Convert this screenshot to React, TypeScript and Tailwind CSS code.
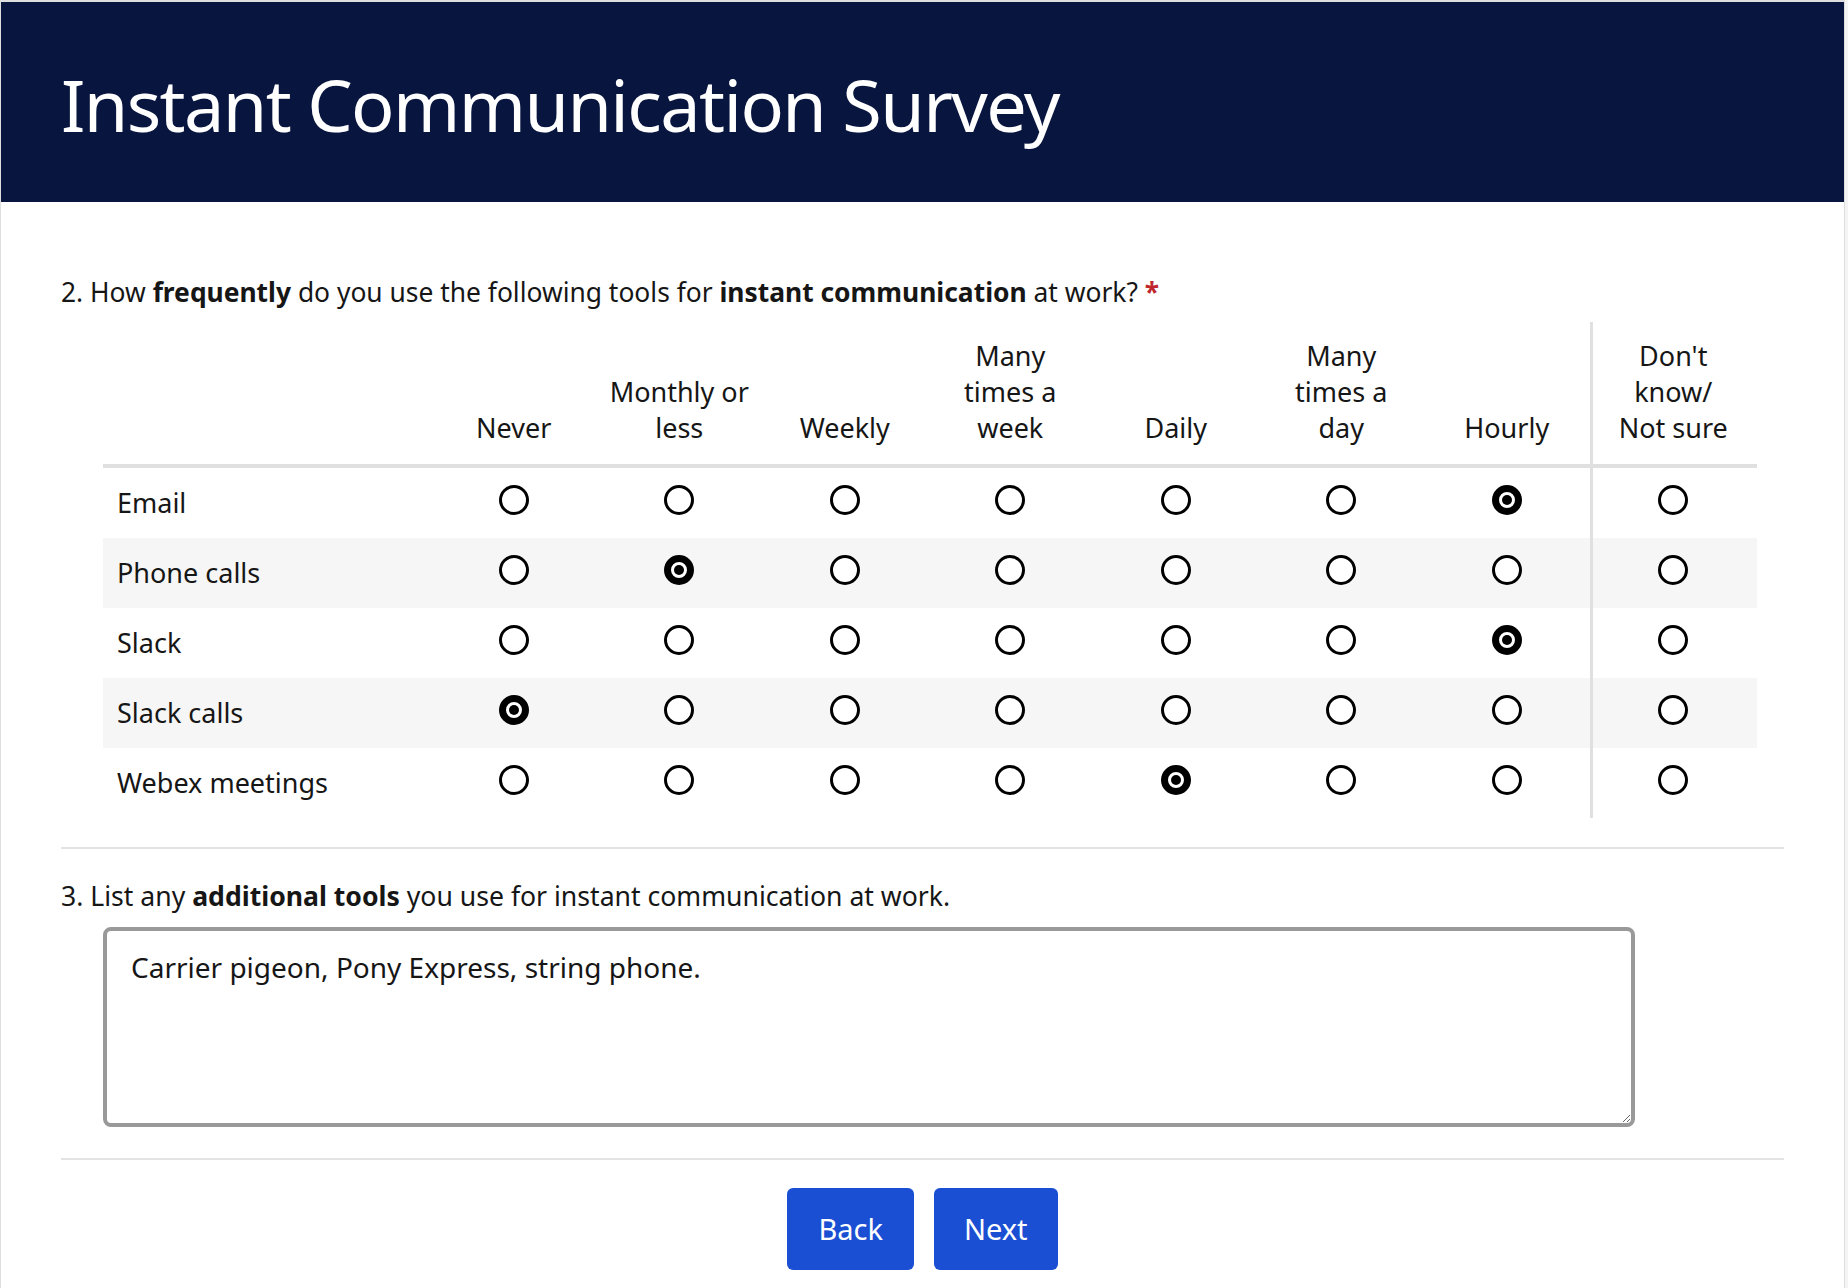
import React from "react";

const columns = [
  ["Never"],
  ["Monthly or", "less"],
  ["Weekly"],
  ["Many", "times a", "week"],
  ["Daily"],
  ["Many", "times a", "day"],
  ["Hourly"],
  ["Don't", "know/", "Not sure"],
];

const rows = [
  { label: "Email", picked: 6 },
  { label: "Phone calls", picked: 1 },
  { label: "Slack", picked: 6 },
  { label: "Slack calls", picked: 0 },
  { label: "Webex meetings", picked: 4 },
];

const gridCols = "grid grid-cols-[328px_repeat(7,165.5px)_164.5px]";

const Radio = ({ checked }: { checked: boolean }) => {
  if (checked) {
    return (
      <span className="mb-[6px] flex h-[30px] w-[30px] items-center justify-center rounded-full border-[7px] border-black bg-white">
        <span className="h-[10px] w-[10px] rounded-full bg-black" />
      </span>
    );
  }
  return <span className="mb-[6px] block h-[30px] w-[30px] rounded-full border-[3px] border-black bg-white" />;
};

const App = () => {
  return (
    <div className="min-h-screen bg-[#f4f4f4] font-['Noto_Sans',sans-serif] text-[#161616]">
      <div className="min-h-[1288px] w-[1845px] border-x border-t-2 border-[#dedede] bg-white">
        <header className="flex h-[200px] items-center bg-[#08153f] pl-[60px] pt-[4px]">
          <h1 className="text-[72px] leading-none font-normal tracking-[-1.6px] text-white">
            Instant Communication Survey
          </h1>
        </header>

        <main className="px-[60px]">
          {/* question 2 */}
          <p className="mt-[72px] text-[26.4px] leading-[36px]">
            2. How <b className="font-bold">frequently</b> do you use the following tools for{" "}
            <b className="font-bold">instant communication</b> at work?{" "}
            <span className="font-bold text-[#c0262d]">*</span>
          </p>

          <div className="relative mt-[12px] ml-[42px] w-[1654px] text-[27px] leading-[36px]">
            <div className={`${gridCols} border-b-4 border-[#e0e0e0]`}>
              <div />
              {columns.map((lines, i) => (
                <div
                  key={i}
                  className={`flex flex-col items-center justify-end pt-[16px] pb-[18px] text-center ${
                    i === 7 ? "border-l-[3px] border-[#e0e0e0]" : ""
                  }`}
                >
                  {lines.map((l) => (
                    <span key={l}>{l}</span>
                  ))}
                </div>
              ))}
            </div>

            {rows.map((row, r) => (
              <div key={row.label} className={`${gridCols} h-[70px] ${r % 2 === 1 ? "bg-[#f6f6f6]" : ""}`}>
                <div className="flex items-center pl-[14px]">{row.label}</div>
                {columns.map((_, c) => (
                  <div
                    key={c}
                    className={`flex items-center justify-center ${c === 7 ? "border-l-[3px] border-[#e0e0e0]" : ""}`}
                  >
                    <Radio checked={row.picked === c} />
                  </div>
                ))}
              </div>
            ))}
          </div>

          <div className="mt-[29px] h-[2px] bg-[#e3e3e3]" />

          {/* question 3 */}
          <p className="mt-[29px] text-[26.6px] leading-[36px]">
            3. List any <b className="font-bold">additional tools</b> you use for instant communication at work.
          </p>
          <textarea
            defaultValue="Carrier pigeon, Pony Express, string phone."
            className="mt-[13px] ml-[42px] block h-[200px] w-[1532px] rounded-lg border-4 border-[#999999] px-[24px] pt-[18px] text-[28px] leading-[36px] text-[#161616] outline-none"
          />

          <div className="mt-[31px] h-[2px] bg-[#e3e3e3]" />

          <div className="flex justify-center gap-[20px] pt-[28px]">
            <button className="h-[82px] rounded-md bg-[#1b4fd3] px-[31px] text-[29px] text-white">Back</button>
            <button className="h-[82px] rounded-md bg-[#1b4fd3] px-[30px] text-[29px] text-white">Next</button>
          </div>
        </main>
      </div>
    </div>
  );
};

export default App;
